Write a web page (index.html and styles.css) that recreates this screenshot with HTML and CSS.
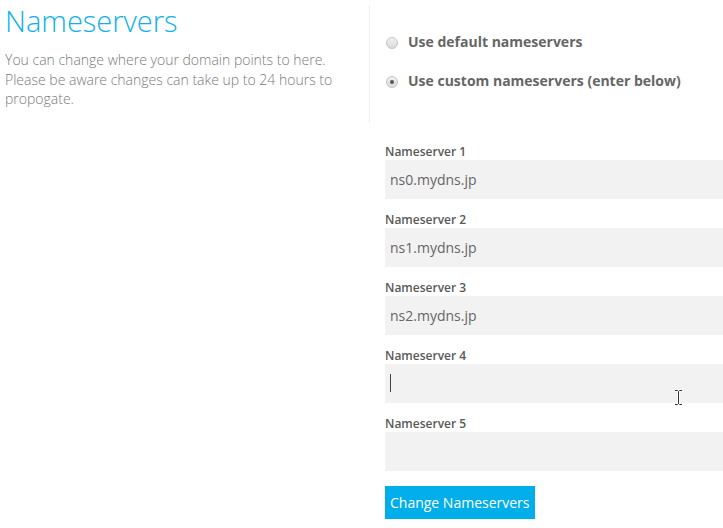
FILE: index.html
```html
<!DOCTYPE html>
<html>
<head>
    <link rel="stylesheet" href="styles.css">
</head>
<body>
    <div class="top">
        <div class="intro">
            <h1>Nameservers</h1>
            <p>You can change where your domain points to here. Please be aware changes can take up to 24 hours to propogate.</p>
        </div>
        <div class="choices">
            <label class="choice">
                <span class="radio"></span>
                Use default nameservers
            </label>
            <label class="choice">
                <span class="radio checked"></span>
                Use custom nameservers (enter below)
            </label>
        </div>
    </div>

    <form class="ns-form">
        <label class="field-label">Nameserver 1</label>
        <div class="field">ns0.mydns.jp</div>
        <label class="field-label">Nameserver 2</label>
        <div class="field">ns1.mydns.jp</div>
        <label class="field-label">Nameserver 3</label>
        <div class="field">ns2.mydns.jp</div>
        <label class="field-label">Nameserver 4</label>
        <div class="field focused">
            <span class="caret"></span>
            <svg class="ibeam" width="9" height="17" viewBox="0 0 9 17">
                <path d="M1 1.5h2.5L4.5 2.5L5.5 1.5H8M4.5 2.5V14.5M1 15.5h2.5L4.5 14.5L5.5 15.5H8" stroke="#fff" stroke-width="2.5" fill="none"/>
                <path d="M1 1.5h2.5L4.5 2.5L5.5 1.5H8M4.5 2.5V14.5M1 15.5h2.5L4.5 14.5L5.5 15.5H8" stroke="#333" stroke-width="1" fill="none"/>
            </svg>
        </div>
        <label class="field-label">Nameserver 5</label>
        <div class="field"></div>
        <button type="button" class="submit">Change Nameservers</button>
    </form>
</body>
</html>
```

FILE: styles.css
```css
body {
    margin: 0;
    font-family: "Open Sans", Arial, sans-serif;
    overflow: hidden;
}
.top {
    display: flex;
}
.intro {
    width: 364px;
    padding: 0 0 0 5px;
    border-right: 1px solid #eeeeee;
    margin-top: 5px;
    height: 118px;
}
h1 {
    margin: 0;
    font-size: 29px;
    font-weight: 300;
    line-height: 32px;
    color: #10b0ec;
}
p {
    margin: 13px 0 0;
    font-size: 14px;
    font-weight: 300;
    line-height: 19.5px;
    color: #7a7a7a;
}
.choices {
    padding: 22px 0 0 15px;
}
.choice {
    display: flex;
    align-items: center;
    height: 39px;
    font-size: 14px;
    font-weight: 700;
    color: #666;
}
.radio {
    width: 10px;
    height: 10px;
    border: 1px solid #c4c4c4;
    border-radius: 50%;
    background: linear-gradient(#f2f2f2, #d8d8d8);
    margin: 3px 10px 0 1px;
    position: relative;
}
.radio.checked:after {
    content: '';
    position: absolute;
    width: 4px;
    height: 4px;
    border-radius: 50%;
    background: #555;
    top: 3px;
    left: 3px;
}
.ns-form {
    margin: 20px 0 0 385px;
}
.field-label {
    display: block;
    font-size: 12px;
    font-weight: 600;
    color: #595959;
    line-height: 17px;
    margin-top: 12px;
}
.field-label:first-child {
    margin-top: 0;
}
.field {
    height: 39px;
    background: #f2f2f2;
    padding: 0 5px;
    font-size: 14px;
    line-height: 39px;
    color: #666;
    position: relative;
}
.caret {
    position: absolute;
    left: 5px;
    top: 10px;
    width: 1px;
    height: 18px;
    background: #444;
}
.ibeam {
    position: absolute;
    left: 289px;
    top: 25px;
}
.submit {
    margin-top: 15px;
    padding: 0 5px;
    height: 33px;
    border: none;
    border-radius: 0;
    background: #00aeea;
    color: #fff;
    font-family: "Open Sans", Arial, sans-serif;
    font-size: 14px;
    cursor: pointer;
}
```
